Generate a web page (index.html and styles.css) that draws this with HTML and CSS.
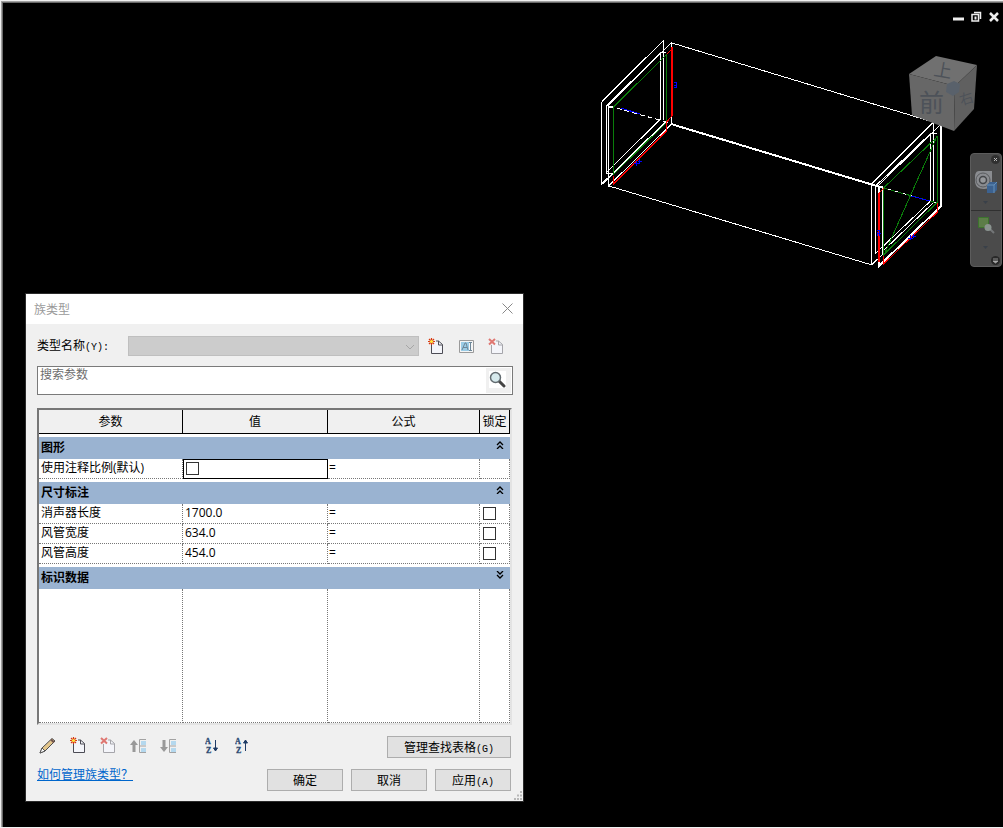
FILE: index.html
```
<!DOCTYPE html>
<html lang="zh-CN">
<head>
  <meta charset="UTF-8">
  <meta name="viewport" content="width=device-width, initial-scale=1.0">
  <title>族类型</title>
  <link rel="stylesheet" href="styles.css">
</head>
<body>
  <!-- shared icons -->
  <svg class="defs" width="0" height="0" aria-hidden="true">
    <symbol id="icon-page" viewBox="0 0 16 17">
      <path d="M3.500 7v8.500h11v-9L10.500 3H8" fill="#f4f5fa" stroke="currentColor"/>
      <path d="M10.500 3v4h4" fill="none" stroke="currentColor"/>
    </symbol>
    <symbol id="icon-new" viewBox="0 0 16 17">
      <use href="#icon-page"/>
      <path d="M3.500 0v7M0 3.500h7M1 1l5 5M6 1L1 6" stroke="#d83a10" stroke-width="1.200"/>
      <circle cx="3.500" cy="3.500" r="1.600" fill="#ffe640"/>
    </symbol>
    <symbol id="icon-delete" viewBox="0 0 16 17">
      <use href="#icon-page"/>
      <path d="M1 1l6 5.500M7 1L1 6.500" stroke="#df7772" stroke-width="2"/>
    </symbol>
    <symbol id="icon-rows" viewBox="0 0 18 16">
      <path d="M17 1.500h-6.500v13H17M10.500 8H17" fill="none" stroke="#a2a2a2"/>
      <path d="M12 3h5v4h-5zM12 10h5v4h-5z" fill="#b4d8ee"/>
    </symbol>
    <symbol id="chev" viewBox="0 0 8 8">
      <path d="M1 4l3-3 3 3M1 8l3-3 3 3" fill="none" stroke="#000" stroke-width="1.300"/>
    </symbol>
  </svg>

  <main class="viewport">
    <div class="window-buttons">
      <button type="button" aria-label="最小化"><svg width="12" height="12"><path d="M1 8h11" stroke="#eee" stroke-width="3"/></svg></button>
      <button type="button" aria-label="还原"><svg width="12" height="12"><path d="M4 1.500h6.500V8M2 3.500h6.500V10H2z" fill="none" stroke="#eee" stroke-width="1.500"/><path d="M4.500 5.500h2v3h-2z" fill="#eee"/></svg></button>
      <button type="button" aria-label="关闭"><svg width="12" height="12"><path d="M2 2l8 8M10 2l-8 8" stroke="#eee" stroke-width="2.500"/></svg></button>
    </div>

    <svg class="model" width="353" height="240" viewBox="590 35 353 240" shape-rendering="crispEdges">
      <g class="edge">
        <!-- duct body -->
        <path d="M672 43L933 122M609 186L872 265"/>
        <path class="thick" d="M671 124L880 187"/>
        <!-- left connector -->
        <path d="M601.500 101.500L663.500 40.500V120M601.500 101.500V184L607 178"/>
        <path d="M608.500 105L671.500 42.500V124L608.500 186V105"/>
        <path d="M606.500 106L660.500 52.500V119L606.500 172.500V106M606 173h7M660 52h6M608 107h6"/>
        <path d="M602 184L666 121M603 184L667 121M602 102L637 67"/>
        <path class="dash" d="M609 106L670 123"/>
        <!-- right connector -->
        <path d="M871.500 265V184L933.500 122V202M871.500 265L883 254"/>
        <path d="M879 185L941 124"/>
        <path d="M875.500 186L930.500 133.500V201L875.500 253.500V186M930 133h7M876 186h7M882.500 187v68M883 251L934 202"/>
        <path class="thick" d="M879 186V266L941 206V124"/>
        <path d="M877 187L915 148"/>
        <path class="dash" d="M880 187L937 203"/>
      </g>
      <g class="reference">
        <path d="M613.500 107L666.500 54.500V122.500L613.500 174.500z"/>
        <path d="M883.500 188L937.500 136.500V202L883.500 255z M937 136L884 255"/>
        <path class="dash" d="M880 187L937 203"/>
      </g>
      <g class="dimension">
        <path class="thick" d="M672 47V116"/>
        <path d="M667 54L672 49M672 116L666.500 122V131L613.500 184V176"/>
        <path class="thick" d="M879 193V262"/>
        <path d="M879 193L884 188M883.500 256V264L937.500 212V203"/>
      </g>
      <g class="label">
        <path d="M621 108L640 114M911 196L930 201"/>
        <path d="M674 82.500h3M676.500 82v6M674 85.500h3M674 87.500h3M634 163.500h5M636.500 161v5M638 161.500h4M639.500 159v5M877 230.500h3M877.500 232v4M879.500 231v5M877 233.500h4M908 238.500h5M910.500 235v5M912 236.500h4M913.500 234v4"/>
      </g>
    </svg>

    <svg class="view-cube" width="70" height="77" viewBox="908 55 70 77">
      <path d="M936 56L977 65L955 86L909 74z" fill="#707070"/>
      <path d="M909 74L955 86L954 131L912 115z" fill="#676767"/>
      <path d="M977 65L974 109L954 131L955 86z" fill="#606060"/>
      <path d="M947 84l7-3 6 3-1 8-6 4-7-4z" fill="#59616b"/>
      <text x="919" y="112" font-size="25">前</text>
      <text x="934" y="77" font-size="18" transform="rotate(10 943 70)">上</text>
      <text x="959" y="104" font-size="14" transform="rotate(-18 965 98)">右</text>
    </svg>

    <nav class="nav-bar" aria-label="导航栏">
      <button type="button" class="nav-mini" aria-label="关闭导航栏"><svg width="9" height="9"><circle cx="4.500" cy="4.500" r="4.500" fill="#303030"/><path d="M3 3l3 3M6 3L3 6" stroke="#bbb"/></svg></button>
      <button type="button" class="nav-tool" aria-label="控制盘">
        <svg width="24" height="26" viewBox="0 0 24 26">
          <path d="M5 1h13v11c0 4-3 7-8 7-6 0-9-3-9-8V7c0-3 1-6 4-6z" fill="#8a8c90"/>
          <circle cx="9" cy="10" r="7" fill="none" stroke="#595b5e"/>
          <circle cx="9" cy="10" r="3.500" fill="#96989b" stroke="#45474a" stroke-width="1.500"/>
          <path d="M13 15l3-3h7v8l-3 3h-7z" fill="#3c6290"/>
          <path d="M13 15h7v8M20 15l3-3" fill="none" stroke="#6490b8"/>
        </svg>
        <svg width="8" height="5"><path d="M1 1h5L3.500 4z" fill="#394049"/></svg>
      </button>
      <button type="button" class="nav-tool" aria-label="缩放">
        <svg width="24" height="26" viewBox="0 0 24 26">
          <path d="M4.500 2.500h10v10h-10z" fill="#5c7d48" stroke="#3c732d"/>
          <path d="M16 14l4 4" stroke="#737678" stroke-width="2"/>
          <circle cx="14" cy="12.500" r="3.500" fill="#8b9490"/>
        </svg>
        <svg width="8" height="5"><path d="M1 1h5L3.500 4z" fill="#394049"/></svg>
      </button>
      <button type="button" class="nav-mini" aria-label="导航栏选项"><svg width="9" height="9"><circle cx="4.500" cy="4.500" r="4.500" fill="#292929"/><path d="M2 3h5M2 5h5L4.500 7z" stroke="#aaa" fill="#aaa" stroke-width=".8"/></svg></button>
    </nav>

    <section class="dialog" role="dialog" aria-labelledby="dialog-title">
      <header class="title-bar">
        <h1 id="dialog-title">族类型</h1>
        <button type="button" aria-label="关闭"><svg width="11" height="11"><path d="M.5 .5l10 10M10.500 .5l-10 10" stroke="#888"/></svg></button>
      </header>

      <div class="dialog-body">
        <div class="type-row">
          <label for="type-name">类型名称<span class="key">(Y):</span></label>
          <div class="select-wrap">
            <select id="type-name" disabled><option></option></select>
            <svg width="10" height="6"><path d="M1 1l4 4 4-4" fill="none" stroke="#a6a6a6"/></svg>
          </div>
          <div class="type-tools">
            <button type="button" class="icon" aria-label="新建类型"><svg width="16" height="17"><use href="#icon-new"/></svg></button>
            <button type="button" class="icon" aria-label="重命名类型">
              <svg width="17" height="17" viewBox="0 0 17 17">
                <path d="M1.500 2.500h14v12h-14z" fill="#f5f5f5" stroke="#9a9a9a"/>
                <path d="M3 4h8v9H3z" fill="#9bcce6"/>
                <path d="M4 12l3-7h1l2 7M5 9.500h4M11 4.500h3M12.500 4.500v8M11 12.500h3" fill="none" stroke="#6e8798"/>
              </svg>
            </button>
            <button type="button" class="icon off" aria-label="删除类型"><svg width="16" height="17"><use href="#icon-delete"/></svg></button>
          </div>
        </div>

        <div class="search">
          <input type="text" placeholder="搜索参数" aria-label="搜索参数">
          <button type="button" aria-label="搜索">
            <svg width="17" height="17" viewBox="0 0 17 17">
              <path d="M0 0h17v17H0z" fill="#fff"/>
              <path d="M10 10l5 5" stroke="#444" stroke-width="3" stroke-linecap="round"/>
              <circle cx="6.500" cy="6.500" r="5" fill="#d6e9ec" stroke="#626b70" stroke-width="1.500"/>
            </svg>
          </button>
        </div>

        <div class="grid-frame">
          <table class="params">
            <colgroup><col class="col-name"><col class="col-value"><col><col class="col-lock"></colgroup>
            <thead>
              <tr><th>参数</th><th>值</th><th>公式</th><th>锁定</th></tr>
            </thead>
            <tbody>
              <tr class="group"><th colspan="4"><button type="button">图形<svg width="8" height="8"><use href="#chev"/></svg></button></th></tr>
              <tr><td>使用注释比例(默认)</td><td class="selected"><input type="checkbox" aria-label="使用注释比例(默认)"></td><td class="formula">=</td><td></td></tr>
            </tbody>
            <tbody>
              <tr class="group"><th colspan="4"><button type="button">尺寸标注<svg width="8" height="8"><use href="#chev"/></svg></button></th></tr>
              <tr><td>消声器长度</td><td>1700.0</td><td class="formula">=</td><td class="lock"><input type="checkbox" aria-label="锁定消声器长度"></td></tr>
              <tr><td>风管宽度</td><td>634.0</td><td class="formula">=</td><td class="lock"><input type="checkbox" aria-label="锁定风管宽度"></td></tr>
              <tr><td>风管高度</td><td>454.0</td><td class="formula">=</td><td class="lock"><input type="checkbox" aria-label="锁定风管高度"></td></tr>
            </tbody>
            <tbody>
              <tr class="group closed"><th colspan="4"><button type="button">标识数据<svg width="8" height="8"><use href="#chev"/></svg></button></th></tr>
              <tr class="filler"><td></td><td></td><td></td><td></td></tr>
            </tbody>
          </table>
        </div>

        <div class="tool-row">
          <div class="param-tools">
            <button type="button" class="icon" aria-label="编辑参数">
              <svg width="18" height="17" viewBox="0 0 18 17">
                <path d="M1 16l2-5L13 1.500l3 2.500L6 14z" fill="#e2c58b" stroke="#4d4d50"/>
                <path d="M1 16l2-5 3 3z" fill="#fff" stroke="#555"/>
                <path d="M12 2.500l3 3" stroke="#73564e" stroke-width="2"/>
              </svg>
            </button>
            <button type="button" class="icon" aria-label="新建参数"><svg width="16" height="17"><use href="#icon-new"/></svg></button>
            <button type="button" class="icon off" aria-label="删除参数"><svg width="16" height="17"><use href="#icon-delete"/></svg></button>
            <button type="button" class="icon" aria-label="上移"><svg width="18" height="16"><use href="#icon-rows"/><path d="M5 14V5" stroke="#999" stroke-width="3"/><path d="M1 7l4-5 4 5z" fill="#999"/></svg></button>
            <button type="button" class="icon" aria-label="下移"><svg width="18" height="16"><use href="#icon-rows"/><path d="M5 2v9" stroke="#999" stroke-width="3"/><path d="M1 9l4 5 4-5z" fill="#999"/></svg></button>
            <button type="button" class="icon sort" aria-label="升序排列"><svg width="15" height="17"><text x="0" y="7">A</text><text x="1" y="16">Z</text><path d="M10.500 3v11M8.500 11l2 3 2-3z"/></svg></button>
            <button type="button" class="icon" aria-label="降序排列"><svg width="15" height="17"><text x="0" y="7">A</text><text x="1" y="16">Z</text><path d="M10.500 14V3M8.500 6l2-3 2 3z"/></svg></button>
          </div>
          <button type="button" class="btn wide">管理查找表格<span class="key">(G)</span></button>
        </div>

        <div class="footer">
          <a href="#">如何管理族类型？</a>
          <div class="footer-buttons">
            <button type="button" class="btn">确定</button>
            <button type="button" class="btn">取消</button>
            <button type="button" class="btn">应用<span class="key">(A)</span></button>
          </div>
        </div>
      </div>
      <svg class="grip" width="9" height="9"><path d="M7 0h2v2H7zM4 3.500h2v2H4zM7 3.500h2v2H7zM1 7h2v2H1zM4 7h2v2H4zM7 7h2v2H7z" fill="#b8b8b8"/></svg>
    </section>
  </main>
</body>
</html>
```

FILE: styles.css
```
* {
  box-sizing: border-box;
}

body {
  margin: 0;
  background: #000;
  font-family: "Liberation Sans", "Noto Sans CJK SC", sans-serif;
  font-size: 12px;
  color: #000;
}

button {
  font: inherit;
  color: inherit;
  padding: 0;
  border: none;
  background: none;
}

svg {
  display: block;
}

.defs {
  position: absolute;
}

.viewport {
  position: relative;
  min-height: 100vh;
  border: 1px solid #f0f0f0;
  border-right: none;
  box-shadow: inset 1px 1px #a0a0a0, inset 2px 2px #696969;
  overflow: hidden;
}

.window-buttons {
  display: flex;
  justify-content: flex-end;
  gap: 6px;
  padding: 10px 3px;
}

/* 3D view */
.model {
  position: absolute;
  top: 34px;
  right: 60px;
  fill: none;
}

.model .edge { stroke: #fff; }
.model .reference { stroke: #0a7d0a; }
.model .dimension { stroke: #f00; }
.model .label { stroke: #00f; }
.model .thick { stroke-width: 2; }
.model .dash { stroke-dasharray: 5 3; }
.model .reference .dash { stroke-dashoffset: 5; }

.view-cube {
  position: absolute;
  top: 54px;
  right: 25px;
  fill: #4d5259;
}

.nav-bar {
  position: absolute;
  top: 152px;
  right: 1px;
  width: 32px;
  height: 114px;
  display: flex;
  flex-direction: column;
  background: #4b4b4b;
  border: 1px solid #5c5c5c;
  border-radius: 4px;
}

.nav-mini {
  align-self: flex-end;
  padding: 1px;
}

.nav-tool {
  flex: 1;
  display: flex;
  flex-direction: column;
  align-items: center;
  justify-content: center;
  gap: 4px;
}

.nav-tool + .nav-tool {
  border-top: 1px solid #303030;
}

/* dialog */
.dialog {
  position: absolute;
  top: 292px;
  left: 24px;
  width: 499px;
  background: #f0f0f0;
  border: 1px solid #2b2b2b;
}

.title-bar {
  display: flex;
  align-items: center;
  justify-content: space-between;
  height: 30px;
  padding: 0 10px 2px 8px;
  background: #fff;
}

.title-bar h1 {
  margin: 0;
  font-size: 12px;
  font-weight: normal;
  color: #999;
}

.dialog-body {
  padding: 11px 10px 10px 11px;
}

/* access keys are set in the fixed-width face */
.key {
  font-family: "Liberation Mono", monospace;
  font-size: 10px;
}

.type-row {
  display: flex;
  align-items: center;
  height: 22px;
}

.type-row label {
  width: 91px;
  padding-bottom: 3px;
}

.select-wrap {
  position: relative;
  flex: 1;
}

.select-wrap svg {
  position: absolute;
  top: 8px;
  right: 4px;
}

.type-row select {
  display: block;
  width: 100%;
  height: 20px;
  appearance: none;
  background: #ccc;
  border: 1px solid #bfbfbf;
  border-radius: 0;
  opacity: 1;
}

.type-tools {
  display: flex;
  gap: 12px;
  width: 94px;
  padding-left: 8px;
}

.icon {
  display: flex;
  justify-content: center;
  width: 18px;
  color: #4c4c55;
}

.icon.off {
  color: #a5a5aa;
}

.search {
  display: flex;
  height: 29px;
  margin-top: 9px;
  background: #fff;
  border: 1px solid #7a7a7a;
}

.search input {
  flex: 1;
  align-self: flex-start;
  height: 16px;
  padding: 0 2px;
  border: none;
  outline: none;
  font: inherit;
}

.search input::placeholder {
  color: #6d6d6d;
}

.search button {
  display: flex;
  justify-content: center;
  width: 25px;
  margin: 1px;
  padding-top: 3px;
  padding-right: 2px;
  background: #f0f0f0;
}

/* parameter table */
.grid-frame {
  margin-top: 13px;
  margin-right: 1px;
  background: #fff;
  border: 2px solid #e3e3e3;
  border-top-color: #777;
  border-left-color: #777;
}

.params {
  width: 100%;
  table-layout: fixed;
  border-spacing: 0;
  font-family: "Open Sans", "Noto Sans CJK SC", sans-serif;
}

.col-name { width: 144px; }
.col-value { width: 145px; }
.col-lock { width: 30px; }

.params th,
.params td {
  padding: 0 2px;
  line-height: 18px;
  white-space: nowrap;
}

.params thead th {
  height: 24px;
  font-weight: normal;
  background: #f0f0f0;
  border-right: 1px solid #000;
  border-bottom: 1px solid #000;
}

.params td {
  height: 20px;
  padding-bottom: 2px;
  line-height: 17px;
  border-right: 1px dotted #777;
  border-bottom: 1px dotted #777;
}

.params .group th {
  height: 25px;
  padding: 0;
  border-top: 3px solid #fff;
  background: #9ab3d1;
}

.group button {
  display: flex;
  justify-content: space-between;
  width: 100%;
  height: 22px;
  padding: 0 6px 0 2px;
  font-weight: bold;
  line-height: 22px;
}

.group svg {
  margin-top: 4px;
}

.group.closed svg {
  transform: rotate(180deg);
}

.params .filler td {
  height: 134px;
}

.params .formula {
  padding-left: 1px;
}

.params .selected,
.params .lock {
  padding-bottom: 0;
}

.params input {
  display: block;
  appearance: none;
  width: 13px;
  height: 13px;
  margin: 0 0 0 1px;
  border: 1px solid #333;
  background: #fff;
}

.params .selected {
  outline: 1px solid #000;
  outline-offset: -1px;
}

/* bottom area */
.tool-row {
  display: flex;
  align-items: center;
  justify-content: space-between;
  margin-top: 11px;
  padding-right: 2px;
}

.param-tools {
  display: flex;
  align-items: center;
  gap: 12px;
  padding: 0 0 3px 2px;
}

.param-tools .sort {
  margin-left: 14px;
}

.param-tools text {
  font-family: "Liberation Serif", serif;
  font-size: 8px;
  font-weight: bold;
  fill: #2c4a73;
  stroke: #2c4a73;
  stroke-width: 0.3px;
}

.param-tools text ~ path {
  fill: #1f3c66;
  stroke: #1f3c66;
}

.btn {
  width: 76px;
  height: 22px;
  padding-bottom: 2px;
  background: #e1e1e1;
  border: 1px solid #adadad;
}

.btn.wide {
  width: 124px;
}

.footer {
  display: flex;
  justify-content: space-between;
  margin-top: 11px;
  padding-right: 2px;
}

.footer a {
  line-height: 12px;
  color: #0066cc;
}

.footer-buttons {
  display: flex;
  gap: 8px;
}

.grip {
  position: absolute;
  right: 1px;
  bottom: 1px;
}
```
